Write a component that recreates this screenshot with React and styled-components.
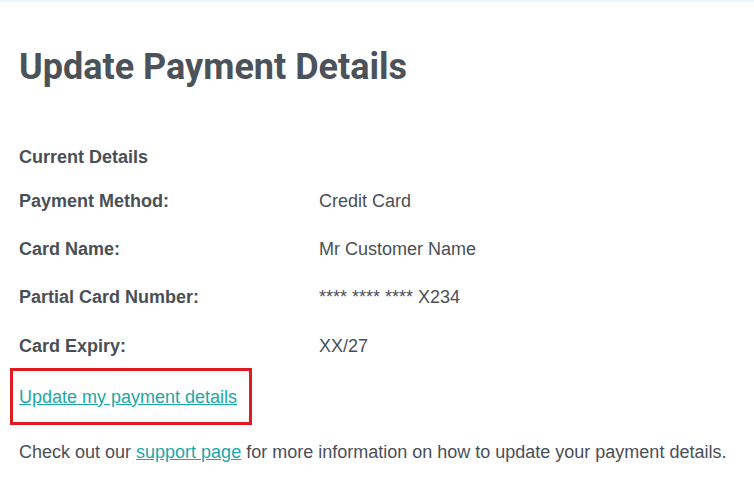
import React from "react";
import styled, { createGlobalStyle } from "styled-components";

const GlobalStyle = createGlobalStyle`
  html, body {
    margin: 0;
    padding: 0;
    background: #ffffff;
  }
  body {
    font-family: "Liberation Sans", Arial, sans-serif;
    color: #4a4f57;
  }
`;

const details = [
  { label: "Payment Method:", value: "Credit Card" },
  { label: "Card Name:", value: "Mr Customer Name" },
  { label: "Partial Card Number:", value: "**** **** **** X234" },
  { label: "Card Expiry:", value: "XX/27" },
];

function App() {
  return (
    <>
      <GlobalStyle />
      <Page>
        <Title>Update Payment Details</Title>
        <Section>
          <SectionTitle>Current Details</SectionTitle>
          {details.map((d) => (
            <Row key={d.label}>
              <Label>{d.label}</Label>
              <Value>{d.value}</Value>
            </Row>
          ))}
        </Section>
        <Highlight>
          <Link href="#">Update my payment details</Link>
        </Highlight>
        <Note>
          Check out our <Link href="#">support page</Link> for more information
          on how to update your payment details.
        </Note>
      </Page>
    </>
  );
}

export default App;

const Page = styled.div`
  min-height: 491px;
  box-sizing: border-box;
  border-top: 2px solid #eef4fb;
  padding: 43px 19px 0;
`;

const Title = styled.h1`
  margin: 0;
  font-family: Roboto, "Liberation Sans", sans-serif;
  font-weight: 700;
  font-size: 36px;
  line-height: 44px;
  color: #4b525a;
`;

const Section = styled.div`
  margin-top: 56px;
  display: flex;
  flex-direction: column;
  gap: 24px;
`;

const SectionTitle = styled.div`
  font-weight: 700;
  font-size: 18px;
  line-height: 24px;
  margin-bottom: -4px;
`;

const Row = styled.div`
  display: grid;
  grid-template-columns: 300px 1fr;
  font-size: 18px;
  line-height: 24px;

  &:last-child {
    margin-top: 1px;
  }
`;

const Label = styled.div`
  font-weight: 700;
`;

const Value = styled.div``;

const Highlight = styled.div`
  margin: 10px 0 0 -9px;
  width: 242px;
  height: 57px;
  box-sizing: border-box;
  border: 3px solid #e21b23;
  display: flex;
  align-items: center;
  padding-left: 6px;
  font-size: 18px;
  line-height: 24px;
`;

const Link = styled.a`
  color: #1aa8a8;
  text-decoration: underline;
`;

const Note = styled.p`
  margin: 15px 0 0;
  font-size: 18px;
  line-height: 24px;
`;
